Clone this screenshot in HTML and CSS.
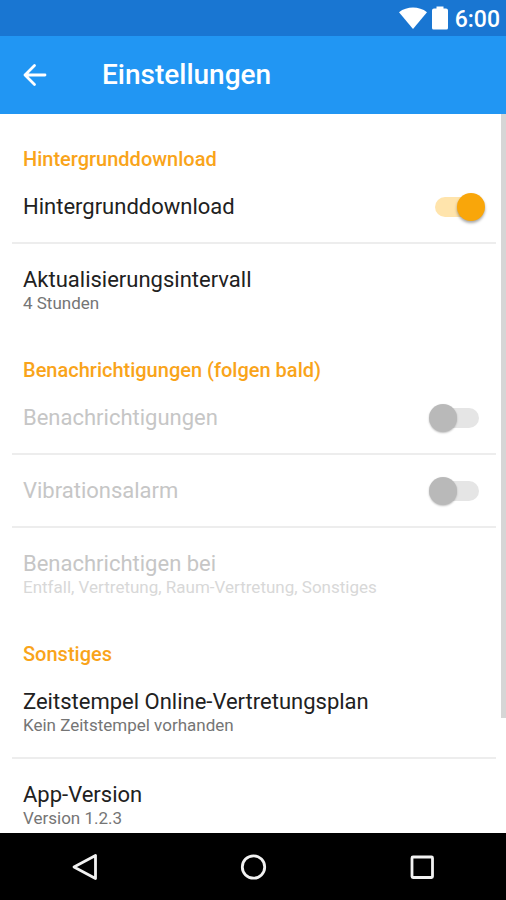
FILE: index.html
```html
<!DOCTYPE html>
<html lang="de">
<head>
<meta charset="utf-8">
<meta name="viewport" content="width=device-width, initial-scale=1">
<title>Einstellungen</title>
<link rel="stylesheet" href="styles.css">
</head>
<body>
<div class="status-bar">
  <svg class="wifi" width="28" height="24" viewBox="0 0 28 24" aria-hidden="true"><path d="M0 6.200C8 0 20 0 28 6.200L14 23Z"/></svg>
  <svg class="battery" width="16" height="24" viewBox="0 0 16 24" aria-hidden="true"><path d="M4.500 0.500h7v2H14q2 0 2 2V22q0 1.500-1.500 1.500h-13Q0 23.500 0 22V4.500q0-2 2-2h2.500z"/></svg>
  <time class="clock">6:00</time>
</div>
<header class="app-bar">
  <button class="back" type="button" aria-label="Zurück">
    <svg width="24" height="24" viewBox="0 0 24 24" aria-hidden="true"><path d="M11.500 2.500 2 12l9.500 9.500M2 12h20"/></svg>
  </button>
  <h1 class="title">Einstellungen</h1>
</header>
<main class="settings">
  <section class="group">
    <h2 class="group-title">Hintergrunddownload</h2>
    <div class="row row-switch">
      <label class="name" for="download">Hintergrunddownload</label>
      <input class="switch" id="download" type="checkbox" role="switch" checked>
    </div>
    <button class="row" type="button">
      <span class="name">Aktualisierungsintervall</span>
      <span class="summary">4 Stunden</span>
    </button>
  </section>
  <section class="group">
    <h2 class="group-title">Benachrichtigungen (folgen bald)</h2>
    <div class="row row-switch disabled">
      <label class="name" for="notify">Benachrichtigungen</label>
      <input class="switch" id="notify" type="checkbox" role="switch" disabled>
    </div>
    <div class="row row-switch disabled">
      <label class="name" for="vibrate">Vibrationsalarm</label>
      <input class="switch" id="vibrate" type="checkbox" role="switch" disabled>
    </div>
    <button class="row disabled" type="button" disabled>
      <span class="name">Benachrichtigen bei</span>
      <span class="summary">Entfall, Vertretung, Raum-Vertretung, Sonstiges</span>
    </button>
  </section>
  <section class="group">
    <h2 class="group-title">Sonstiges</h2>
    <button class="row" type="button">
      <span class="name">Zeitstempel Online-Vertretungsplan</span>
      <span class="summary">Kein Zeitstempel vorhanden</span>
    </button>
    <button class="row" type="button">
      <span class="name">App-Version</span>
      <span class="summary">Version 1.2.3</span>
    </button>
  </section>
  <div class="scroll-thumb"></div>
</main>
<nav class="nav-bar">
  <button type="button" aria-label="Zurück">
    <svg width="28" height="28" viewBox="0 0 28 28" aria-hidden="true"><path d="M25.500 2.500v23L4 14z"/></svg>
  </button>
  <button type="button" aria-label="Startseite">
    <svg width="28" height="28" viewBox="0 0 28 28" aria-hidden="true"><circle cx="14.500" cy="14" r="11.200"/></svg>
  </button>
  <button type="button" aria-label="Übersicht">
    <svg width="28" height="28" viewBox="0 0 28 28" aria-hidden="true"><rect x="4" y="4" width="20.500" height="20.500" rx="1"/></svg>
  </button>
</nav>
</body>
</html>
```
FILE: styles.css
```css
* {
  box-sizing: border-box;
}

body {
  display: flex;
  flex-direction: column;
  height: 100vh;
  margin: 0;
  background: #fff;
  color: #212121;
  font-family: Roboto, "Liberation Sans", sans-serif;
}

button {
  padding: 0;
  border: 0;
  background: none;
  color: inherit;
  font: inherit;
}

.status-bar {
  display: flex;
  flex: none;
  align-items: center;
  justify-content: flex-end;
  height: 36px;
  padding: 0 6px;
  background: #1976d2;
  color: #fff;
}

.status-bar svg {
  fill: #fff;
}

.wifi {
  margin-right: 5px;
}

.battery {
  margin-right: 7px;
}

.clock {
  padding-top: 3px;
  font-size: 23px;
  font-weight: 500;
  line-height: 28px;
}

.app-bar {
  display: flex;
  flex: none;
  align-items: center;
  height: 78px;
  padding: 0 23px;
  background: #2196f3;
  color: #fff;
}

.back {
  display: flex;
  margin-right: 55px;
}

.back svg {
  fill: none;
  stroke: #fff;
  stroke-width: 2.8;
  stroke-linecap: round;
  stroke-linejoin: round;
}

.title {
  margin: 0;
  font-size: 28px;
  font-weight: 500;
  line-height: 32px;
}

.settings {
  position: relative;
  flex: 1;
  min-height: 0;
  overflow: hidden;
  padding: 10px 10px 0 12px;
}

.group-title {
  margin: 0;
  padding: 23px 11px 0;
  color: #f9a41a;
  font-size: 20px;
  font-weight: 500;
  line-height: 24px;
}

.row {
  display: flex;
  flex-direction: column;
  width: 100%;
  padding: 23px 11px 22px;
  text-align: left;
}

.row + .row {
  border-top: 2px solid #ededed;
}

.row-switch {
  flex-direction: row;
  align-items: center;
  justify-content: space-between;
}

.name {
  font-size: 22px;
  line-height: 26px;
}

.summary {
  color: #757575;
  font-size: 17px;
  line-height: 20px;
}

.disabled .name {
  color: #c6c6c6;
}

.disabled .summary {
  color: #d8d8d8;
}

.switch {
  position: relative;
  flex: none;
  width: 56px;
  height: 20px;
  margin: 0;
  appearance: none;
}

.switch::before {
  position: absolute;
  inset: 0 6px;
  border-radius: 10px;
  background: #e5e5e5;
  content: "";
}

.switch::after {
  position: absolute;
  top: -4px;
  left: 0;
  width: 28px;
  height: 28px;
  border-radius: 50%;
  background: #b9b9b9;
  box-shadow: 0 1px 2px rgba(0, 0, 0, 0.25);
  content: "";
}

.switch:checked::before {
  background: #ffe4ac;
}

.switch:checked::after {
  right: 0;
  left: auto;
  background: #f9a60a;
  box-shadow: 0 2px 3px rgba(0, 0, 0, 0.35);
}

.scroll-thumb {
  position: absolute;
  top: 0;
  right: 0;
  width: 5px;
  height: 84%;
  background: #d6d6d6;
}

.nav-bar {
  display: grid;
  flex: none;
  grid-template-columns: repeat(3, 1fr);
  height: 67px;
  background: #000;
}

.nav-bar button {
  display: grid;
  place-items: center;
}

.nav-bar svg {
  fill: none;
  stroke: #f2f2f2;
  stroke-width: 2.8;
  stroke-linejoin: round;
}
```
